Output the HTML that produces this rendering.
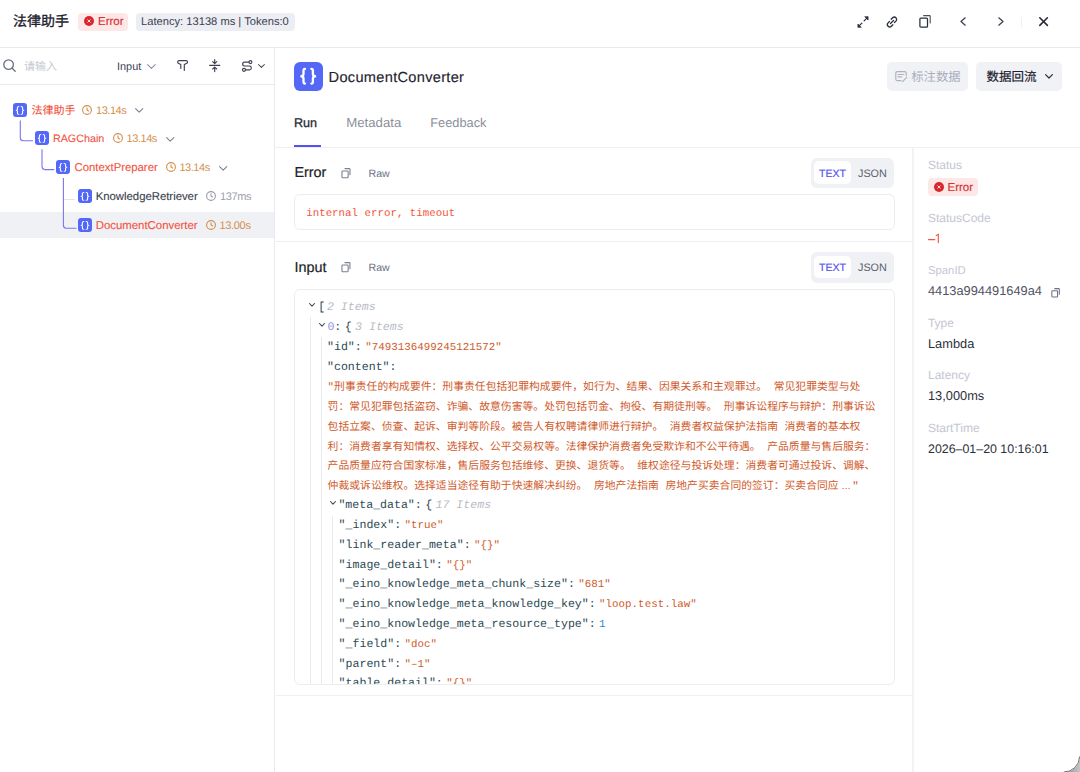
<!DOCTYPE html>
<html lang="zh-CN">
<head>
<meta charset="utf-8">
<style>
*{margin:0;padding:0;box-sizing:border-box}
html,body{width:1080px;height:772px;overflow:hidden;background:#fff}
body{position:relative;font-family:"Liberation Sans",sans-serif;color:#1d2129;text-rendering:geometricPrecision}
.a{position:absolute}
.t{position:absolute;line-height:0;white-space:pre;margin-top:1px}
.t.mono{margin-top:0}
.hl{position:absolute;height:1px;background:#e9eaef}
.vl{position:absolute;width:1px;background:#e9eaef}
svg{position:absolute;overflow:visible}
.badge-err{position:absolute;height:18px;width:50px;background:#fde8e7;border-radius:4px}
.ico{position:absolute;background:#5468f8;border-radius:3px}
.red{color:#f2543f;-webkit-text-stroke:0.12px #f2543f}
.org{color:#d48f4e}
.gry{color:#8a8f9d}
.mono{font-family:"Liberation Mono",monospace;font-size:10.8px}
.k{color:#2d4a54;font-size:11.58px}
.g{display:inline-block;width:3.4px}
.s{color:#cf5a2a;letter-spacing:0.03px}
.n{color:#2f86d2}
.it{font-style:italic;color:#b8bbc3;font-size:11.58px}
.lbl{font-size:12px;color:#c3c6d2}
.val{font-size:12.8px;color:#2b2f3c}
</style>
</head>
<body>

<!-- ===== HEADER ===== -->
<div class="t" style="left:13px;top:20.1px;font-size:14px;-webkit-text-stroke:0.35px #1f2330;color:#1f2330">法律助手</div>
<div class="badge-err" style="left:78px;top:12.5px"></div>
<svg style="left:83.6px;top:16.4px" width="10" height="10" viewBox="0 0 10 10"><circle cx="5" cy="5" r="5" fill="#d7262e"/><path d="M3.75 3.75L6.25 6.25M6.25 3.75L3.75 6.25" stroke="#fff" stroke-width="0.85" stroke-linecap="round"/></svg>
<div class="t" style="left:98px;top:21.4px;font-size:11.5px;-webkit-text-stroke:0.15px #d5302f;color:#d5302f">Error</div>
<div class="a" style="left:136px;top:12.5px;width:159px;height:18px;background:#eceef3;border-radius:4px"></div>
<div class="t" style="left:141px;top:21.4px;font-size:11.17px;color:#3a3f50">Latency: 13138 ms | Tokens:0</div>

<!-- header right icons -->
<svg style="left:857px;top:15.5px" width="12" height="12" viewBox="0 0 12 12" fill="none" stroke="#2a2f3d" stroke-width="1.2" stroke-linecap="round"><path d="M1.8 10.2L4.9 7.1M10.2 1.8L7.1 4.9"/><path d="M0.9 11.1V8L4 11.1ZM11.1 0.9V4L8 0.9Z" fill="#2a2f3d" stroke-width="0.7" stroke-linejoin="round"/></svg>
<svg style="left:886px;top:15.8px" width="12" height="12" viewBox="0 0 12 12" fill="none" stroke="#2a2f3d" stroke-width="1.3" stroke-linecap="round"><path d="M5.2 3.2L6.6 1.8a2.3 2.3 0 0 1 3.3 3.3L8.5 6.5M6.8 8.8L5.4 10.2a2.3 2.3 0 0 1-3.3-3.3L3.5 5.5M4.5 7.5L7.5 4.5"/></svg>
<svg style="left:918.6px;top:15.4px" width="12" height="13" viewBox="0 0 12 13" fill="none" stroke="#2a2f3d" stroke-width="1.25" stroke-linejoin="round" stroke-linecap="round"><rect x="0.9" y="3.2" width="7.6" height="8.9" rx="0.9"/><path d="M4.6 0.6H10.5a0.7 0.7 0 0 1 0.7 0.7V8" stroke="#4a4f5c" stroke-width="1.1"/></svg>
<svg style="left:960.4px;top:17.3px" width="6" height="9" viewBox="0 0 6 9" fill="none" stroke="#3a3f4e" stroke-width="1.25" stroke-linecap="round" stroke-linejoin="round"><path d="M5.2 0.8L1 4.5L5.2 8.2"/></svg>
<svg style="left:997.5px;top:17.3px" width="6" height="9" viewBox="0 0 6 9" fill="none" stroke="#3a3f4e" stroke-width="1.25" stroke-linecap="round" stroke-linejoin="round"><path d="M0.8 0.8L5 4.5L0.8 8.2"/></svg>
<div class="a" style="left:1021px;top:16.7px;width:1px;height:10px;background:#eceef2"></div>
<svg style="left:1039.2px;top:17.1px" width="10" height="10" viewBox="0 0 10 10" fill="none" stroke="#272b38" stroke-width="1.6" stroke-linecap="round"><path d="M0.8 0.8L8.4 8.4M8.4 0.8L0.8 8.4"/></svg>

<div class="hl" style="left:0;top:47px;width:1080px"></div>

<!-- ===== LEFT PANEL ===== -->
<div class="vl" style="left:274px;top:48px;height:724px"></div>
<svg style="left:3px;top:59.3px" width="13" height="13" viewBox="0 0 13 13" fill="none" stroke="#6b7080" stroke-width="1.3" stroke-linecap="round"><circle cx="5.6" cy="5.6" r="4.8"/><path d="M9.2 9.2L12.2 12.2"/></svg>
<div class="t" style="left:24px;top:66.3px;font-size:11px;color:#c5c8d2">请输入</div>
<div class="t" style="left:117px;top:65.6px;font-size:10.9px;color:#3d4151">Input</div>
<svg style="left:147.3px;top:63.9px" width="9" height="5" viewBox="0 0 9 5" fill="none" stroke="#8b90a0" stroke-width="1.1" stroke-linecap="round" stroke-linejoin="round"><path d="M0.6 0.6L4.4 4.4L8.2 0.6"/></svg>
<svg style="left:176.8px;top:60.2px" width="12" height="11" viewBox="0 0 12 11" fill="none" stroke="#3d4151" stroke-width="1.15" stroke-linejoin="round" stroke-linecap="round"><path d="M3.8 8.4V4.6L1.3 3.3C0.3 2.8 0.5 0.6 1.9 0.6H9.3C10.7 0.6 10.9 2.8 9.9 3.3L7.3 4.6V10.5"/></svg>
<svg style="left:208.9px;top:59px" width="12" height="14" viewBox="0 0 12 14" fill="none" stroke="#3d4151" stroke-width="1.15" stroke-linecap="round" stroke-linejoin="round"><path d="M0.6 6.3H10.8M5.7 0.6V4.6M3.7 2.7L5.7 4.6L7.7 2.7M5.7 12.6V8.1M3.7 10L5.7 8.1L7.7 10"/></svg>
<svg style="left:241.9px;top:59.9px" width="11" height="12" viewBox="0 0 11 12" fill="none" stroke="#3d4151" stroke-width="1.15" stroke-linecap="round"><circle cx="8.4" cy="2.1" r="1.5"/><circle cx="2" cy="9.8" r="1.5"/><path d="M6.9 2.1H2.6a1.95 1.95 0 0 0 0 3.9H7.8a1.95 1.95 0 0 1 0 3.8H3.5"/></svg>
<svg style="left:257.9px;top:64.1px" width="8" height="5" viewBox="0 0 8 5" fill="none" stroke="#3d4151" stroke-width="1.05" stroke-linecap="round" stroke-linejoin="round"><path d="M0.5 0.5L3.45 3.4L6.4 0.5"/></svg>
<div class="hl" style="left:0;top:84px;width:274px"></div>

<!-- tree -->
<div class="a" style="left:0;top:212px;width:274px;height:26px;background:#f0f1f5"></div>
<!-- connectors -->
<svg style="left:0;top:0" width="274" height="240" fill="none" stroke="#7c74ef" stroke-width="1.1">
<path d="M20.3 120.5V137.8a3 3 0 0 0 3 3H33"/>
<path d="M42 149.3V166.6a3 3 0 0 0 3 3H54.2"/>
<path d="M63.4 178V225.2a3 3 0 0 0 3 3H76.5"/>
</svg>
<div class="a" style="left:64px;top:199px;width:11px;height:1px;background:#e2e3e8"></div>

<!-- row1 -->
<div class="ico" style="left:13px;top:102.7px;width:14px;height:14px"></div>
<svg style="left:13px;top:102.7px" width="14" height="14" viewBox="0 0 14 14" fill="none" stroke="#fff" stroke-width="1.05" stroke-linecap="round" stroke-linejoin="round"><path d="M5.8 3.4C4.8 3.4 4.4 3.8 4.4 4.6V6.4C4.4 6.9 4 7.2 3.2 7.3 4 7.4 4.4 7.7 4.4 8.2V10.2C4.4 11 4.8 11.3 5.8 11.3M8.2 3.4C9.2 3.4 9.6 3.8 9.6 4.6V6.4C9.6 6.9 10 7.2 10.8 7.3 10 7.4 9.6 7.7 9.6 8.2V10.2C9.6 11 9.2 11.3 8.2 11.3"/></svg>
<div class="t red" style="left:31.4px;top:110px;font-size:11px">法律助手</div>
<svg style="left:82px;top:104.7px" width="10" height="10" viewBox="0 0 10 10" fill="none" stroke="#d48f4e" stroke-width="1.1" stroke-linecap="round" stroke-linejoin="round"><circle cx="5" cy="5" r="4.4"/><path d="M5 2.7V5L6.6 6"/></svg>
<div class="t org" style="left:96px;top:109.7px;font-size:11px;letter-spacing:-0.45px">13.14s</div>
<svg style="left:135px;top:108px" width="9" height="5" viewBox="0 0 9 5" fill="none" stroke="#7e8391" stroke-width="1.1" stroke-linecap="round" stroke-linejoin="round"><path d="M0.6 0.6L4.2 4.2L7.8 0.6"/></svg>
<!-- row2 -->
<div class="ico" style="left:35px;top:131.4px;width:14px;height:14px"></div>
<svg style="left:35px;top:131.4px" width="14" height="14" viewBox="0 0 14 14" fill="none" stroke="#fff" stroke-width="1.05" stroke-linecap="round" stroke-linejoin="round"><path d="M5.8 3.4C4.8 3.4 4.4 3.8 4.4 4.6V6.4C4.4 6.9 4 7.2 3.2 7.3 4 7.4 4.4 7.7 4.4 8.2V10.2C4.4 11 4.8 11.3 5.8 11.3M8.2 3.4C9.2 3.4 9.6 3.8 9.6 4.6V6.4C9.6 6.9 10 7.2 10.8 7.3 10 7.4 9.6 7.7 9.6 8.2V10.2C9.6 11 9.2 11.3 8.2 11.3"/></svg>
<div class="t red" style="left:52.9px;top:138.4px;font-size:10.75px">RAGChain</div>
<svg style="left:112.6px;top:133.4px" width="10" height="10" viewBox="0 0 10 10" fill="none" stroke="#d48f4e" stroke-width="1.1" stroke-linecap="round" stroke-linejoin="round"><circle cx="5" cy="5" r="4.4"/><path d="M5 2.7V5L6.6 6"/></svg>
<div class="t org" style="left:126.6px;top:138.4px;font-size:11px;letter-spacing:-0.45px">13.14s</div>
<svg style="left:165.5px;top:136.7px" width="9" height="5" viewBox="0 0 9 5" fill="none" stroke="#7e8391" stroke-width="1.1" stroke-linecap="round" stroke-linejoin="round"><path d="M0.6 0.6L4.2 4.2L7.8 0.6"/></svg>
<!-- row3 -->
<div class="ico" style="left:56.1px;top:160.2px;width:14px;height:14px"></div>
<svg style="left:56.1px;top:160.2px" width="14" height="14" viewBox="0 0 14 14" fill="none" stroke="#fff" stroke-width="1.05" stroke-linecap="round" stroke-linejoin="round"><path d="M5.8 3.4C4.8 3.4 4.4 3.8 4.4 4.6V6.4C4.4 6.9 4 7.2 3.2 7.3 4 7.4 4.4 7.7 4.4 8.2V10.2C4.4 11 4.8 11.3 5.8 11.3M8.2 3.4C9.2 3.4 9.6 3.8 9.6 4.6V6.4C9.6 6.9 10 7.2 10.8 7.3 10 7.4 9.6 7.7 9.6 8.2V10.2C9.6 11 9.2 11.3 8.2 11.3"/></svg>
<div class="t red" style="left:74.6px;top:167.2px;font-size:11.33px">ContextPreparer</div>
<svg style="left:166px;top:162.2px" width="10" height="10" viewBox="0 0 10 10" fill="none" stroke="#d48f4e" stroke-width="1.1" stroke-linecap="round" stroke-linejoin="round"><circle cx="5" cy="5" r="4.4"/><path d="M5 2.7V5L6.6 6"/></svg>
<div class="t org" style="left:179.4px;top:167.2px;font-size:11px;letter-spacing:-0.45px">13.14s</div>
<svg style="left:219px;top:165.5px" width="9" height="5" viewBox="0 0 9 5" fill="none" stroke="#7e8391" stroke-width="1.1" stroke-linecap="round" stroke-linejoin="round"><path d="M0.6 0.6L4.2 4.2L7.8 0.6"/></svg>
<!-- row4 -->
<div class="ico" style="left:78px;top:189px;width:14px;height:14px"></div>
<svg style="left:78px;top:189px" width="14" height="14" viewBox="0 0 14 14" fill="none" stroke="#fff" stroke-width="1.05" stroke-linecap="round" stroke-linejoin="round"><path d="M5.8 3.4C4.8 3.4 4.4 3.8 4.4 4.6V6.4C4.4 6.9 4 7.2 3.2 7.3 4 7.4 4.4 7.7 4.4 8.2V10.2C4.4 11 4.8 11.3 5.8 11.3M8.2 3.4C9.2 3.4 9.6 3.8 9.6 4.6V6.4C9.6 6.9 10 7.2 10.8 7.3 10 7.4 9.6 7.7 9.6 8.2V10.2C9.6 11 9.2 11.3 8.2 11.3"/></svg>
<div class="t" style="left:95.7px;top:196.1px;font-size:11.33px;-webkit-text-stroke:0.12px #3b3f4e;color:#3b3f4e">KnowledgeRetriever</div>
<svg style="left:206px;top:191.1px" width="10" height="10" viewBox="0 0 10 10" fill="none" stroke="#9a9ea9" stroke-width="1.1" stroke-linecap="round" stroke-linejoin="round"><circle cx="5" cy="5" r="4.4"/><path d="M5 2.7V5L6.6 6"/></svg>
<div class="t" style="left:219.9px;top:196.1px;font-size:11px;letter-spacing:-0.35px;color:#9a9ea9">137ms</div>
<!-- row5 -->
<div class="ico" style="left:78px;top:217.8px;width:14px;height:14px"></div>
<svg style="left:78px;top:217.8px" width="14" height="14" viewBox="0 0 14 14" fill="none" stroke="#fff" stroke-width="1.05" stroke-linecap="round" stroke-linejoin="round"><path d="M5.8 3.4C4.8 3.4 4.4 3.8 4.4 4.6V6.4C4.4 6.9 4 7.2 3.2 7.3 4 7.4 4.4 7.7 4.4 8.2V10.2C4.4 11 4.8 11.3 5.8 11.3M8.2 3.4C9.2 3.4 9.6 3.8 9.6 4.6V6.4C9.6 6.9 10 7.2 10.8 7.3 10 7.4 9.6 7.7 9.6 8.2V10.2C9.6 11 9.2 11.3 8.2 11.3"/></svg>
<div class="t red" style="left:95.7px;top:224.8px;font-size:11.4px">DocumentConverter</div>
<svg style="left:206px;top:219.8px" width="10" height="10" viewBox="0 0 10 10" fill="none" stroke="#d48f4e" stroke-width="1.1" stroke-linecap="round" stroke-linejoin="round"><circle cx="5" cy="5" r="4.4"/><path d="M5 2.7V5L6.6 6"/></svg>
<div class="t org" style="left:219.4px;top:224.8px;font-size:11px;letter-spacing:-0.3px">13.00s</div>

<!-- ===== MAIN HEADER ===== -->
<div class="a" style="left:294px;top:62px;width:29px;height:28.7px;background:#5468f8;border-radius:6px"></div>
<svg style="left:294px;top:62px" width="29" height="29" viewBox="0 0 29 29" fill="none" stroke="#fff" stroke-width="2.3" stroke-linecap="round" stroke-linejoin="round"><path d="M11 6.9C9.9 6.9 9.5 7.5 9.5 8.8V12C9.5 13.3 8.9 14 7.3 14.25 8.9 14.5 9.5 15.2 9.5 16.5V19.7C9.5 21 9.9 21.6 11 21.6M17.4 6.9C18.5 6.9 18.9 7.5 18.9 8.8V12C18.9 13.3 19.5 14 21.1 14.25 19.5 14.5 18.9 15.2 18.9 16.5V19.7C18.9 21 18.5 21.6 17.4 21.6"/></svg>
<div class="t" style="left:328.6px;top:76.5px;font-size:14.6px;letter-spacing:0.3px;-webkit-text-stroke:0.15px #1f2330;color:#1f2330">DocumentConverter</div>

<!-- tabs -->
<div class="t" style="left:294px;top:121.5px;font-size:12.6px;-webkit-text-stroke:0.3px #262a36;color:#262a36">Run</div>
<div class="t" style="left:346.3px;top:121.7px;font-size:13.2px;color:#8b8f9b">Metadata</div>
<div class="t" style="left:430.3px;top:121.7px;font-size:12.8px;color:#8b8f9b">Feedback</div>
<div class="a" style="left:294px;top:145px;width:27px;height:2px;background:#5252f2"></div>
<div class="hl" style="left:275px;top:147px;width:805px;background:#efeff2"></div>

<!-- action buttons -->
<div class="a" style="left:887.4px;top:62px;width:80.6px;height:28.5px;background:#f1f2f6;border-radius:5px"></div>
<svg style="left:895px;top:71px" width="13" height="12" viewBox="0 0 13 12" fill="none" stroke="#aeb2c0" stroke-width="1.15" stroke-linecap="round" stroke-linejoin="round"><path d="M11.2 4.6V2A1.4 1.4 0 0 0 9.8 0.6H2.2A1.4 1.4 0 0 0 0.8 2V8.2A1.4 1.4 0 0 0 2.2 9.6H6.2M3 3.5H8.8M3 5.9H6.6M11.7 6.4L7.6 10.6"/></svg>
<div class="t" style="left:911.3px;top:75.7px;font-size:12.3px;color:#a9adbc">标注数据</div>
<div class="a" style="left:975.9px;top:62px;width:85.7px;height:28.5px;background:#f1f2f6;border-radius:5px"></div>
<div class="t" style="left:986.4px;top:75.6px;font-size:12.5px;-webkit-text-stroke:0.2px #1d2130;color:#1d2130">数据回流</div>
<svg style="left:1044.5px;top:74.4px" width="8" height="5" viewBox="0 0 8 5" fill="none" stroke="#2a2e3b" stroke-width="1.2" stroke-linecap="round" stroke-linejoin="round"><path d="M0.6 0.6L4 4L7.4 0.6"/></svg>

<!-- ===== RIGHT PANEL ===== -->
<div class="a" style="left:912px;top:148px;width:2px;height:624px;background:#f3f3f5"></div>
<div class="t lbl" style="left:928px;top:164px">Status</div>
<div class="badge-err" style="left:928px;top:178px"></div>
<svg style="left:933.6px;top:182px" width="10" height="10" viewBox="0 0 10 10"><circle cx="5" cy="5" r="5" fill="#d7262e"/><path d="M3.75 3.75L6.25 6.25M6.25 3.75L3.75 6.25" stroke="#fff" stroke-width="0.85" stroke-linecap="round"/></svg>
<div class="t" style="left:947.5px;top:187px;font-size:11.5px;-webkit-text-stroke:0.15px #d5302f;color:#d5302f">Error</div>
<div class="t lbl" style="left:928px;top:217px">StatusCode</div>
<svg style="left:927px;top:232px" width="14" height="12" viewBox="0 0 14 12" fill="none" stroke="#f2543f" stroke-linecap="round" stroke-linejoin="round"><path d="M1.5 7.6H7.8" stroke-width="1.1"/><path d="M9.2 3.6L11.3 2.1V10.6" stroke-width="1.15"/></svg>
<div class="t lbl" style="left:928px;top:270.2px;font-size:11.3px">SpanID</div>
<div class="t val" style="left:928px;top:289.7px;color:#4f5364">4413a994491649a4</div>
<svg style="left:1050.6px;top:287.6px" width="10" height="10" viewBox="0 0 10 10" fill="none" stroke="#6b7080" stroke-width="1.05" stroke-linejoin="round" stroke-linecap="round"><rect x="0.85" y="2.75" width="5.7" height="6.2" rx="0.7"/><path d="M3.7 0.6H7.7A0.6 0.6 0 0 1 8.3 1.2V6.2"/></svg>
<div class="t lbl" style="left:928px;top:321.7px;font-size:11.9px">Type</div>
<div class="t val" style="left:928px;top:343.2px">Lambda</div>
<div class="t lbl" style="left:928px;top:374px">Latency</div>
<div class="t val" style="left:928px;top:395.3px">13,000ms</div>
<div class="t lbl" style="left:928px;top:427.2px">StartTime</div>
<div class="t val" style="left:928px;top:447.6px;font-size:12.4px">2026–01–20 10:16:01</div>

<!-- ===== ERROR SECTION ===== -->
<div class="t" style="left:294.4px;top:171.9px;font-size:14.4px;-webkit-text-stroke:0.2px #1c1f26;color:#1c1f26">Error</div>
<svg style="left:340.6px;top:167.5px" width="10" height="11" viewBox="0 0 10 11" fill="none" stroke="#7b8090" stroke-width="1.1" stroke-linejoin="round" stroke-linecap="round"><rect x="0.95" y="2.95" width="6.2" height="6.75" rx="0.8"/><path d="M4 0.65H8.3A0.65 0.65 0 0 1 8.95 1.3V6.8"/></svg>
<div class="t" style="left:368.5px;top:172.7px;font-size:10.6px;color:#6b7185">Raw</div>
<div class="a" style="left:810.8px;top:157.6px;width:83.4px;height:30.4px;background:#f0f1f5;border-radius:6px"></div>
<div class="a" style="left:814.2px;top:161px;width:36.5px;height:22.8px;background:#fff;border-radius:5px"></div>
<div class="t" style="left:819px;top:172.5px;font-size:10.5px;-webkit-text-stroke:0.2px #5653f0;color:#5653f0">TEXT</div>
<div class="t" style="left:858px;top:172.5px;font-size:10.8px;color:#5a5f70">JSON</div>
<div class="a" style="left:294.4px;top:194.4px;width:600.4px;height:35.6px;border:1px solid #ecedf0;border-radius:6px"></div>
<div class="t mono" style="left:306.2px;top:214.2px;color:#f5533a">internal error, timeout</div>

<div class="t" style="left:294.4px;top:267.2px;font-size:14.4px;-webkit-text-stroke:0.2px #1c1f26;color:#1c1f26">Input</div>
<svg style="left:340.6px;top:262.2px" width="10" height="11" viewBox="0 0 10 11" fill="none" stroke="#7b8090" stroke-width="1.1" stroke-linejoin="round" stroke-linecap="round"><rect x="0.95" y="2.95" width="6.2" height="6.75" rx="0.8"/><path d="M4 0.65H8.3A0.65 0.65 0 0 1 8.95 1.3V6.8"/></svg>
<div class="t" style="left:368.5px;top:267.3px;font-size:10.6px;color:#6b7185">Raw</div>
<div class="a" style="left:810.8px;top:252.2px;width:83.4px;height:30.4px;background:#f0f1f5;border-radius:6px"></div>
<div class="a" style="left:814.2px;top:255.6px;width:36.5px;height:22.8px;background:#fff;border-radius:5px"></div>
<div class="t" style="left:819px;top:267.1px;font-size:10.5px;-webkit-text-stroke:0.2px #5653f0;color:#5653f0">TEXT</div>
<div class="t" style="left:858px;top:267.1px;font-size:10.8px;color:#5a5f70">JSON</div>

<div class="a" style="left:294.4px;top:289.4px;width:600.4px;height:396px;border:1px solid #ecedf0;border-radius:6px;overflow:hidden">
 <div class="a" style="left:-295.4px;top:-290.4px;width:1080px;height:684px">
  <!-- guides -->
  <div class="a" style="left:309.8px;top:317px;width:1px;height:400px;background:#e9eaed"></div>
  <div class="a" style="left:321px;top:336.5px;width:1px;height:400px;background:#e9eaed"></div>
  <div class="a" style="left:332px;top:515.5px;width:1px;height:400px;background:#e9eaed"></div>
  <!-- chevrons -->
  <svg style="left:308.5px;top:302.8px" width="6" height="4" viewBox="0 0 6 4" fill="none" stroke="#3d4a55" stroke-width="1.1" stroke-linecap="round" stroke-linejoin="round"><path d="M0.5 0.5L3 3.2L5.5 0.5"/></svg>
  <svg style="left:319.4px;top:322.6px" width="6" height="4" viewBox="0 0 6 4" fill="none" stroke="#3d4a55" stroke-width="1.1" stroke-linecap="round" stroke-linejoin="round"><path d="M0.5 0.5L3 3.2L5.5 0.5"/></svg>
  <svg style="left:330.4px;top:501.2px" width="6" height="4" viewBox="0 0 6 4" fill="none" stroke="#3d4a55" stroke-width="1.1" stroke-linecap="round" stroke-linejoin="round"><path d="M0.5 0.5L3 3.2L5.5 0.5"/></svg>
  <div class="t mono" style="left:318.2px;top:308.24px"><span class="k">[</span><span class="g" style="width:1.8px"></span><span class="it">2 Items</span></div>
  <div class="t mono" style="left:327.4px;top:328.04px"><span class="k" style="color:#8f8fe6">0</span><span class="k">:</span><span class="g"></span><span class="k">{</span><span class="g"></span><span class="it">3 Items</span></div>
  <div class="t mono" style="left:327.0px;top:347.84px"><span class="k">"id":</span><span class="g"></span><span class="s">"7493136499245121572"</span></div>
  <div class="t mono" style="left:327.0px;top:367.64px"><span class="k">"content":</span></div>
  <div class="t mono" style="left:327.6px;top:388.14px"><span class="s">"刑事责任的构成要件：刑事责任包括犯罪构成要件，如行为、结果、因果关系和主观罪过。 常见犯罪类型与处</span></div>
  <div class="t mono" style="left:327.6px;top:407.94px"><span class="s">罚：常见犯罪包括盗窃、诈骗、故意伤害等。处罚包括罚金、拘役、有期徒刑等。 刑事诉讼程序与辩护：刑事诉讼</span></div>
  <div class="t mono" style="left:327.6px;top:427.74px"><span class="s">包括立案、侦查、起诉、审判等阶段。被告人有权聘请律师进行辩护。 消费者权益保护法指南 消费者的基本权</span></div>
  <div class="t mono" style="left:327.6px;top:447.54px"><span class="s">利：消费者享有知情权、选择权、公平交易权等。法律保护消费者免受欺诈和不公平待遇。 产品质量与售后服务：</span></div>
  <div class="t mono" style="left:327.6px;top:467.34px"><span class="s">产品质量应符合国家标准，售后服务包括维修、更换、退货等。 维权途径与投诉处理：消费者可通过投诉、调解、</span></div>
  <div class="t mono" style="left:327.6px;top:487.14px"><span class="s">仲裁或诉讼维权。选择适当途径有助于快速解决纠纷。 房地产法指南 房地产买卖合同的签订：买卖合同应</span><span class="s" style="font-family:'Liberation Sans',sans-serif;font-size:10px;letter-spacing:0.3px;margin-left:3px;margin-right:1.4px">...</span><span class="s">"</span></div>
  <div class="t mono" style="left:338.4px;top:506.24px"><span class="k">"meta_data":</span><span class="g"></span><span class="k">{</span><span class="g"></span><span class="it">17 Items</span></div>
  <div class="t mono" style="left:338.6px;top:526.04px"><span class="k">"_index":</span><span class="g"></span><span class="s">"true"</span></div>
  <div class="t mono" style="left:338.6px;top:545.84px"><span class="k">"link_reader_meta":</span><span class="g"></span><span class="s">"{}"</span></div>
  <div class="t mono" style="left:338.6px;top:565.64px"><span class="k">"image_detail":</span><span class="g"></span><span class="s">"{}"</span></div>
  <div class="t mono" style="left:338.6px;top:585.44px"><span class="k">"_eino_knowledge_meta_chunk_size":</span><span class="g"></span><span class="s">"681"</span></div>
  <div class="t mono" style="left:338.6px;top:605.24px"><span class="k">"_eino_knowledge_meta_knowledge_key":</span><span class="g"></span><span class="s">"loop.test.law"</span></div>
  <div class="t mono" style="left:338.6px;top:625.04px"><span class="k">"_eino_knowledge_meta_resource_type":</span><span class="g"></span><span class="n">1</span></div>
  <div class="t mono" style="left:338.6px;top:644.84px"><span class="k">"_field":</span><span class="g"></span><span class="s">"doc"</span></div>
  <div class="t mono" style="left:338.6px;top:664.64px"><span class="k">"parent":</span><span class="g"></span><span class="s">"–1"</span></div>
  <div class="t mono" style="left:338.6px;top:684.44px"><span class="k">"table_detail":</span><span class="g"></span><span class="s">"{}"</span></div>
 </div>
</div>

<div class="hl" style="left:276px;top:241px;width:636px;background:#eceef1"></div>
<div class="hl" style="left:276px;top:695px;width:636px;background:#eff0f2"></div>
<svg style="left:1056px;top:748px" width="24" height="24" viewBox="0 0 24 24"><defs><linearGradient id="cg" x1="0" y1="0" x2="1" y2="0"><stop offset="0" stop-color="#8e8e92"/><stop offset="1" stop-color="#c4c4c8"/></linearGradient></defs><path d="M24 8.5A15.8 15.8 0 0 1 7.8 24.3H24Z" fill="url(#cg)"/><path d="M23.6 8.5A15.6 15.6 0 0 1 7.8 24" fill="none" stroke="#5e5e62" stroke-width="0.9"/></svg>

</body>
</html>
